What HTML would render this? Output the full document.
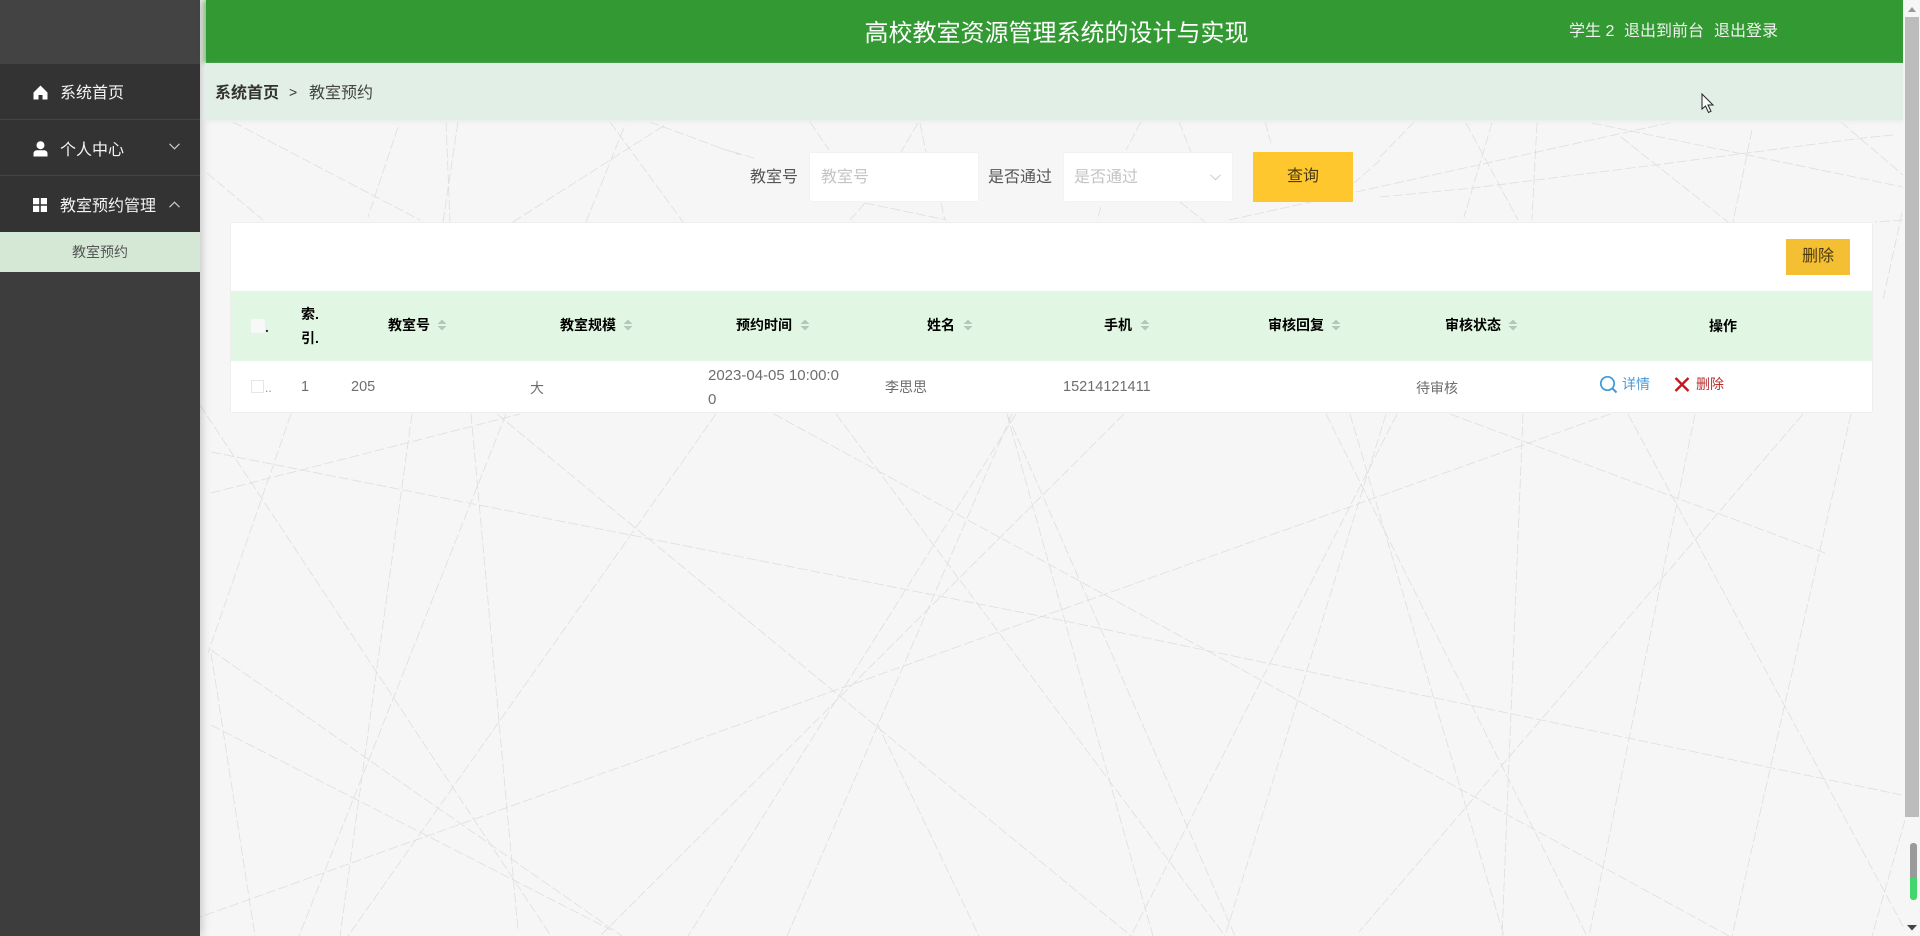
<!DOCTYPE html>
<html lang="zh-CN">
<head>
<meta charset="utf-8">
<title>高校教室资源管理系统的设计与实现</title>
<style>
html,body{margin:0;padding:0;width:1920px;height:936px;overflow:hidden;background:#f6f6f6;font-family:"Liberation Sans","Noto Sans CJK SC",sans-serif}
.a{position:absolute;white-space:nowrap}
#bg{position:absolute;left:0;top:0}
.sb{position:absolute;left:0;top:0;width:200px;height:936px;background:#3d3d3d;box-shadow:0 0 10px rgba(0,0,0,.28)}
.logo{position:absolute;left:0;top:0;width:200px;height:64px;background:#434343}
.mi{position:absolute;left:0;width:200px;height:55px;background:#333;border-bottom:1px solid #444}
.mt{position:absolute;left:60px;color:#f4f4f4;font-size:16px;line-height:24px}
.sub{position:absolute;left:0;top:232px;width:200px;height:40px;background:#d5e8d5;color:#555;font-size:14px;line-height:40px;text-align:center}
.hd{position:absolute;left:206px;top:0;width:1697px;height:63px;background:#339933;box-shadow:-3px 0 4px rgba(51,153,51,.5)}
.bc{position:absolute;left:205px;top:63px;width:1698px;height:57px;background:#e2efe6;box-shadow:0 2px 4px rgba(226,239,230,.8)}
.ctl{position:absolute;top:153px;height:48px;width:168px;background:#fff;box-shadow:0 0 2px rgba(0,0,0,.05);color:#c4c4c4;font-size:16px;line-height:50px;text-indent:11px}
.lb{color:#555;font-size:16px;line-height:24px;top:166px}
.card{position:absolute;left:231px;top:223px;width:1641px;height:189px;background:#fff;box-shadow:0 0 1px rgba(0,0,0,.16)}
.thead{position:absolute;left:231px;top:291px;width:1641px;height:70px;background:#e2f7e3}
.th{color:#000;font-weight:bold;font-size:14px;line-height:20px;top:315px}
.td{color:#6e6e6e;font-size:14.5px;line-height:22px;top:376px}
.cjk{font-size:14px}
.sort{position:absolute;top:319px;width:10px;height:12px}
</style>
</head>
<body>
<svg id="bg" width="1920" height="936" viewBox="0 0 1920 936" fill="none" stroke="#d4d4d4" stroke-width=".8" stroke-dasharray="10 3" opacity=".7">
<path d="M211 452L1060 620L1902 795M211 493L520 414M200 405L551 936M291 414L208 653M412 414L340 936M506 414L299 936M471 414L518 930M497 414L1131 936M716 414L348 936M774 414L1729 936M836 414L1225 936M1012 414L787 936M1007 414L1235 936M1007 414L1153 936M1124 414L600 936M1610 414L200 917M1016 414L688 936M211 650L622 936M211 725L611 930M211 653L255 936M877 723L979 936M1326 414L1587 936M1397 414L1131 936M1386 414L1225 936M1350 414L1504 936M1450 414L1825 553M1523 414L1502 936M1628 414L1905 930M1695 414L1589 936M1803 414L1359 932M1851 414L1732 936M1905 820L1872 936"/>
<path d="M1380 157L1414 122M1466 123L1518 220M1492 123L1464 217M1537 123L1532 220M1229 220L1673 122M1380 197L1473 188L1655 165L1862 138L1893 135M1592 123L1903 187M1621 137L1728 222M1752 130L1733 222M1841 122L1903 175M1902 213L1883 300M810 122L829 150M918 123L901 152M920 123L926 152M1141 122L1126 150M1179 122L1191 152M1265 122L1271 143M720 148L754 158M865 203L850 220M865 203L947 220M941 203L945 220M1101 207L1097 220M1380 160L1354 183M233 122L420 220M398 127L368 217M207 173L263 220M458 122L443 222M446 122L450 222M513 222L665 125M610 122L683 222M586 222L625 125M650 122L740 155M1180 202L1205 222M1903 220L1875 222"/>
</svg>

<div class="sb">
  <div class="logo"></div>
  <div class="mi" style="top:64px"></div>
  <div class="mi" style="top:120px"></div>
  <div class="mi" style="top:176px;height:56px;border:0"></div>
  <svg class="a" style="left:33px;top:85px" width="15" height="15" viewBox="0 0 15 15"><path d="M7.5 0.5L14.5 7.5V14.5H9.5V10H5.5V14.5H0.5V7.5Z" fill="#fff"/></svg>
  <div class="mt" style="top:82px">系统首页</div>
  <svg class="a" style="left:33px;top:141px" width="15" height="16" viewBox="0 0 15 16"><circle cx="7.5" cy="4.2" r="4" fill="#fff"/><path d="M0.5 15.5V12.5C0.5 10.3 2.3 9.2 4 9.2H11C12.7 9.2 14.5 10.3 14.5 12.5V15.5Z" fill="#fff"/></svg>
  <div class="mt" style="top:139px">个人中心</div>
  <svg class="a" style="left:169px;top:143px" width="11" height="7" viewBox="0 0 11 7"><path d="M0.5 0.8L5.5 5.8L10.5 0.8" fill="none" stroke="#cfcfcf" stroke-width="1.1"/></svg>
  <svg class="a" style="left:33px;top:198px" width="14" height="14" viewBox="0 0 14 14"><path d="M0 0H6.2V6.2H0ZM7.8 0H14V6.2H7.8ZM0 7.8H6.2V14H0ZM7.8 7.8H14V14H7.8Z" fill="#fff"/></svg>
  <div class="mt" style="top:195px">教室预约管理</div>
  <svg class="a" style="left:169px;top:201px" width="11" height="7" viewBox="0 0 11 7"><path d="M0.5 6.2L5.5 1.2L10.5 6.2" fill="none" stroke="#cfcfcf" stroke-width="1.1"/></svg>
  <div class="sub">教室预约</div>
</div>

<div class="hd"></div>
<div class="a" style="left:864px;top:16px;color:#fff;font-size:24px;line-height:36px;width:385px;text-align:center">高校教室资源管理系统的设计与实现</div>
<div class="a" style="left:1569px;top:20px;color:#f2f2f2;font-size:16px;line-height:24px">学生 2</div>
<div class="a" style="left:1624px;top:20px;color:#f2f2f2;font-size:16px;line-height:24px">退出到前台</div>
<div class="a" style="left:1714px;top:20px;color:#f2f2f2;font-size:16px;line-height:24px">退出登录</div>

<div class="bc"></div>
<div class="a" style="left:215px;top:82px;color:#333;font-size:16px;line-height:24px;font-weight:bold">系统首页</div>
<div class="a" style="left:289px;top:80px;color:#333;font-size:14px;line-height:24px">&gt;</div>
<div class="a" style="left:309px;top:82px;color:#444;font-size:16px;line-height:24px">教室预约</div>

<div class="a lb" style="left:750px">教室号</div>
<div class="ctl" style="left:810px">教室号</div>
<div class="a lb" style="left:988px">是否通过</div>
<div class="ctl" style="left:1064px;text-indent:10px">是否通过</div>
<svg class="a" style="left:1210px;top:174px" width="11" height="7" viewBox="0 0 11 7"><path d="M0.5 0.8L5.5 5.8L10.5 0.8" fill="none" stroke="#c8c8c8" stroke-width="1"/></svg>
<div class="a" style="left:1253px;top:152px;width:100px;height:50px;background:#ffc72e;color:#4a3a10;font-size:16px;line-height:50px;text-align:center">查询</div>

<div class="card"></div>
<div class="a" style="left:1786px;top:239px;width:64px;height:36px;background:#f5bf33;color:#4a3a10;font-size:16px;line-height:36px;text-align:center">删除</div>
<div class="thead"></div>

<div class="a" style="left:251px;top:319px;width:14px;height:14px;background:#f8f8f8;border-radius:2px"></div>
<div class="a" style="left:265px;top:317px;font-size:14px;font-weight:bold;line-height:20px;color:#333">.</div>
<div class="a th" style="left:301px;top:304px">索.</div>
<div class="a th" style="left:301px;top:328px">引.</div>
<div class="a th" style="left:388px">教室号</div>
<div class="a th" style="left:560px">教室规模</div>
<div class="a th" style="left:736px">预约时间</div>
<div class="a th" style="left:927px">姓名</div>
<div class="a th" style="left:1104px">手机</div>
<div class="a th" style="left:1268px">审核回复</div>
<div class="a th" style="left:1445px">审核状态</div>
<div class="a th" style="left:1709px;top:316px">操作</div>

<svg class="sort" style="left:437px" viewBox="0 0 10 12"><path d="M5 0.5L9.5 5H0.5ZM0.5 7H9.5L5 11.5Z" fill="#b6c6ba"/></svg>
<svg class="sort" style="left:623px" viewBox="0 0 10 12"><path d="M5 0.5L9.5 5H0.5ZM0.5 7H9.5L5 11.5Z" fill="#b6c6ba"/></svg>
<svg class="sort" style="left:800px" viewBox="0 0 10 12"><path d="M5 0.5L9.5 5H0.5ZM0.5 7H9.5L5 11.5Z" fill="#b6c6ba"/></svg>
<svg class="sort" style="left:963px" viewBox="0 0 10 12"><path d="M5 0.5L9.5 5H0.5ZM0.5 7H9.5L5 11.5Z" fill="#b6c6ba"/></svg>
<svg class="sort" style="left:1140px" viewBox="0 0 10 12"><path d="M5 0.5L9.5 5H0.5ZM0.5 7H9.5L5 11.5Z" fill="#b6c6ba"/></svg>
<svg class="sort" style="left:1331px" viewBox="0 0 10 12"><path d="M5 0.5L9.5 5H0.5ZM0.5 7H9.5L5 11.5Z" fill="#b6c6ba"/></svg>
<svg class="sort" style="left:1508px" viewBox="0 0 10 12"><path d="M5 0.5L9.5 5H0.5ZM0.5 7H9.5L5 11.5Z" fill="#b6c6ba"/></svg>

<div class="a" style="left:251px;top:380px;width:13px;height:13px;background:#fff;border:1px solid #e6e6e6;box-sizing:border-box"></div>
<div class="a" style="left:265px;top:378px;font-size:12px;line-height:20px;color:#888">..</div>
<div class="a td" style="left:301px">1</div>
<div class="a td" style="left:351px">205</div>
<div class="a td cjk" style="left:530px;top:377px">大</div>
<div class="a td" style="left:708px;top:364px;font-size:15px;line-height:24px">2023-04-05 10:00:0<br>0</div>
<div class="a td cjk" style="left:885px">李思思</div>
<div class="a td" style="left:1063px">15214121411</div>
<div class="a td cjk" style="left:1416px;top:377px">待审核</div>

<svg class="a" style="left:1599px;top:375px" width="19" height="19" viewBox="0 0 19 19"><circle cx="8.5" cy="8.5" r="6.7" fill="none" stroke="#3d9ad9" stroke-width="1.7"/><path d="M13.2 13.2L17.5 17.5" stroke="#3d9ad9" stroke-width="2"/></svg>
<div class="a" style="left:1622px;top:373px;color:#4a9bd9;font-size:14px;line-height:22px">详情</div>
<svg class="a" style="left:1674px;top:377px" width="16" height="15" viewBox="0 0 16 15"><path d="M1.5 1L14.5 14M14.5 1L1.5 14" stroke="#c8161d" stroke-width="2.4"/></svg>
<div class="a" style="left:1696px;top:373px;color:#b8312f;font-size:14px;line-height:22px">删除</div>

<svg class="a" style="left:1701px;top:93px" width="14" height="21" viewBox="0 0 14 21"><path d="M1 1V16L4.5 13L7.5 19.5L10 18.3L7 12H12Z" fill="#f7fbf8" stroke="#222" stroke-width="1"/></svg>

<div class="a" style="left:1905px;top:17px;width:14px;height:800px;background:#bcbcbc"></div>
<svg class="a" style="left:1905px;top:5px" width="14" height="9" viewBox="0 0 14 9"><path d="M7 2L11 7H3Z" fill="#999"/></svg>
<svg class="a" style="left:1905px;top:923px" width="14" height="9" viewBox="0 0 14 9"><path d="M2 2H12L7 7.5Z" fill="#444"/></svg>
<div class="a" style="left:1910px;top:843px;width:7px;height:36px;background:#9a9a9a;border-radius:3px 3px 0 0"></div>
<div class="a" style="left:1910px;top:878px;width:7px;height:22px;background:#44d66d;border-radius:0 0 3px 3px"></div>
</body>
</html>
